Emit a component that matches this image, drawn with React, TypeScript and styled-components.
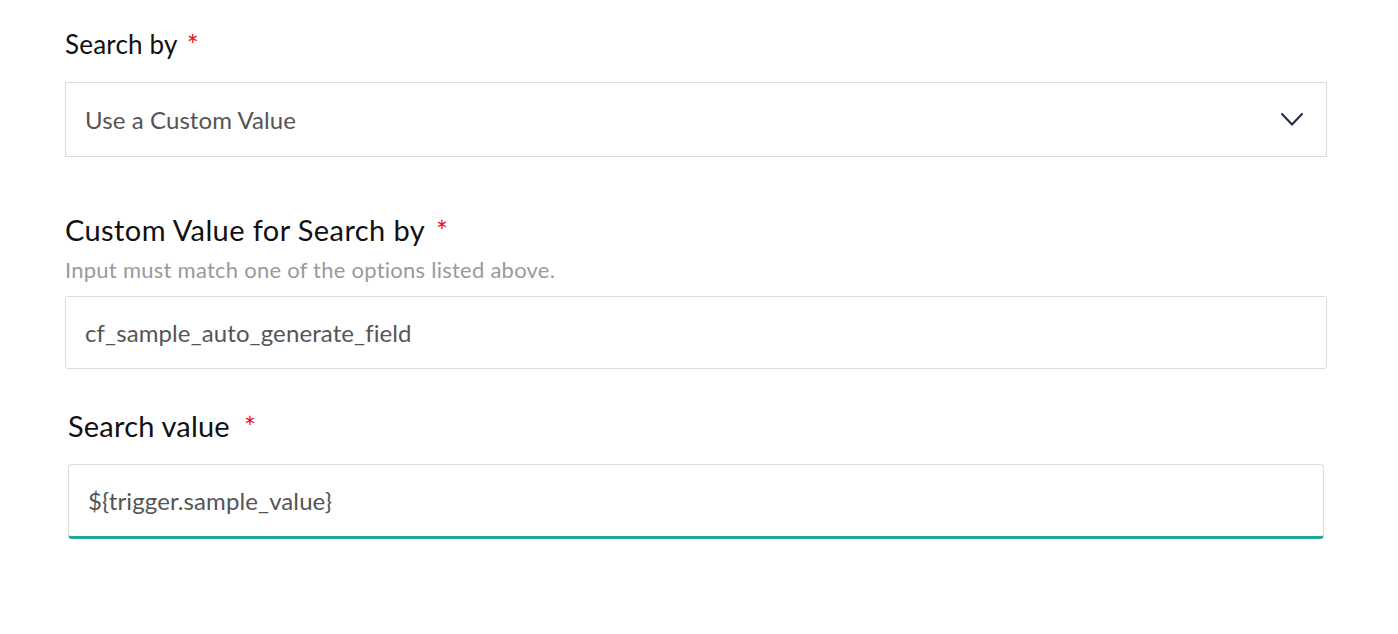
import React from "react";
import styled, { createGlobalStyle } from "styled-components";

const GlobalStyle = createGlobalStyle`
  html, body {
    margin: 0;
    padding: 0;
    background: #ffffff;
  }
  body {
    font-family: Lato, "Open Sans", sans-serif;
    font-variant-ligatures: none;
  }
`;

const Page = styled.div`
  display: flex;
  flex-direction: column;
  padding: 29px 71px 0 65px;
`;

const Field = styled.div<{ $inset?: number; $top: number }>`
  display: flex;
  flex-direction: column;
  margin-top: ${(p) => p.$top}px;
  margin-left: ${(p) => p.$inset ?? 0}px;
  margin-right: ${(p) => p.$inset ?? 0}px;
`;

const Label = styled.label<{ $size: number; $lh: number; $ls?: number }>`
  display: flex;
  align-items: flex-start;
  font-size: ${(p) => p.$size}px;
  line-height: ${(p) => p.$lh}px;
  letter-spacing: ${(p) => p.$ls ?? 0}px;
  color: #111111;
  font-weight: 400;
`;

const Required = styled.span<{ $gap: number; $top: number }>`
  color: #e8131a;
  font-size: 28px;
  line-height: 28px;
  letter-spacing: 0;
  margin-left: ${(p) => p.$gap}px;
  margin-top: ${(p) => p.$top}px;
`;

const Hint = styled.div`
  font-size: 22px;
  line-height: 26px;
  letter-spacing: 0.25px;
  color: #9a9a9a;
  margin-top: 10px;
`;

const Box = styled.div<{ $top: number; $h: number; $focused?: boolean; $radius: number }>`
  display: flex;
  align-items: center;
  justify-content: space-between;
  box-sizing: border-box;
  height: ${(p) => p.$h}px;
  margin-top: ${(p) => p.$top}px;
  padding: 0 22px 0 19px;
  border: 1px solid #dcdcdc;
  border-radius: ${(p) => p.$radius}px;
  background: #ffffff;
  ${(p) => (p.$focused ? "border-bottom: 3px solid #22a899;" : "")}
`;

const Value = styled.span`
  font-size: 24px;
  color: #555555;
  line-height: 28px;
  letter-spacing: 0.1px;
`;

const Chevron = () => (
  <svg width="24" height="15" viewBox="0 0 24 15" fill="none">
    <path d="M1.5 1.5 L12 12.5 L22.5 1.5" stroke="#1b2b42" strokeWidth="2" />
  </svg>
);

export default function App() {
  return (
    <>
      <GlobalStyle />
      <Page>
        <Field $top={0}>
          <Label $size={26} $lh={30} $ls={0.2}>
            Search by
            <Required $gap={9} $top={2}>*</Required>
          </Label>
          <Box $top={23} $h={75} $radius={0}>
            <Value>Use a Custom Value</Value>
            <Chevron />
          </Box>
        </Field>
        <Field $top={56}>
          <Label $size={29} $lh={34} $ls={0.4}>
            Custom Value for Search by
            <Required $gap={11} $top={4}>*</Required>
          </Label>
          <Hint>Input must match one of the options listed above.</Hint>
          <Box $top={13} $h={73} $radius={3}>
            <Value>cf_sample_auto_generate_field</Value>
          </Box>
        </Field>
        <Field $top={40} $inset={3}>
          <Label $size={29} $lh={34} $ls={0.2}>
            Search value
            <Required $gap={14} $top={4}>*</Required>
          </Label>
          <Box $top={21} $h={75} $radius={4} $focused>
            <Value>{"${trigger.sample_value}"}</Value>
          </Box>
        </Field>
      </Page>
    </>
  );
}
